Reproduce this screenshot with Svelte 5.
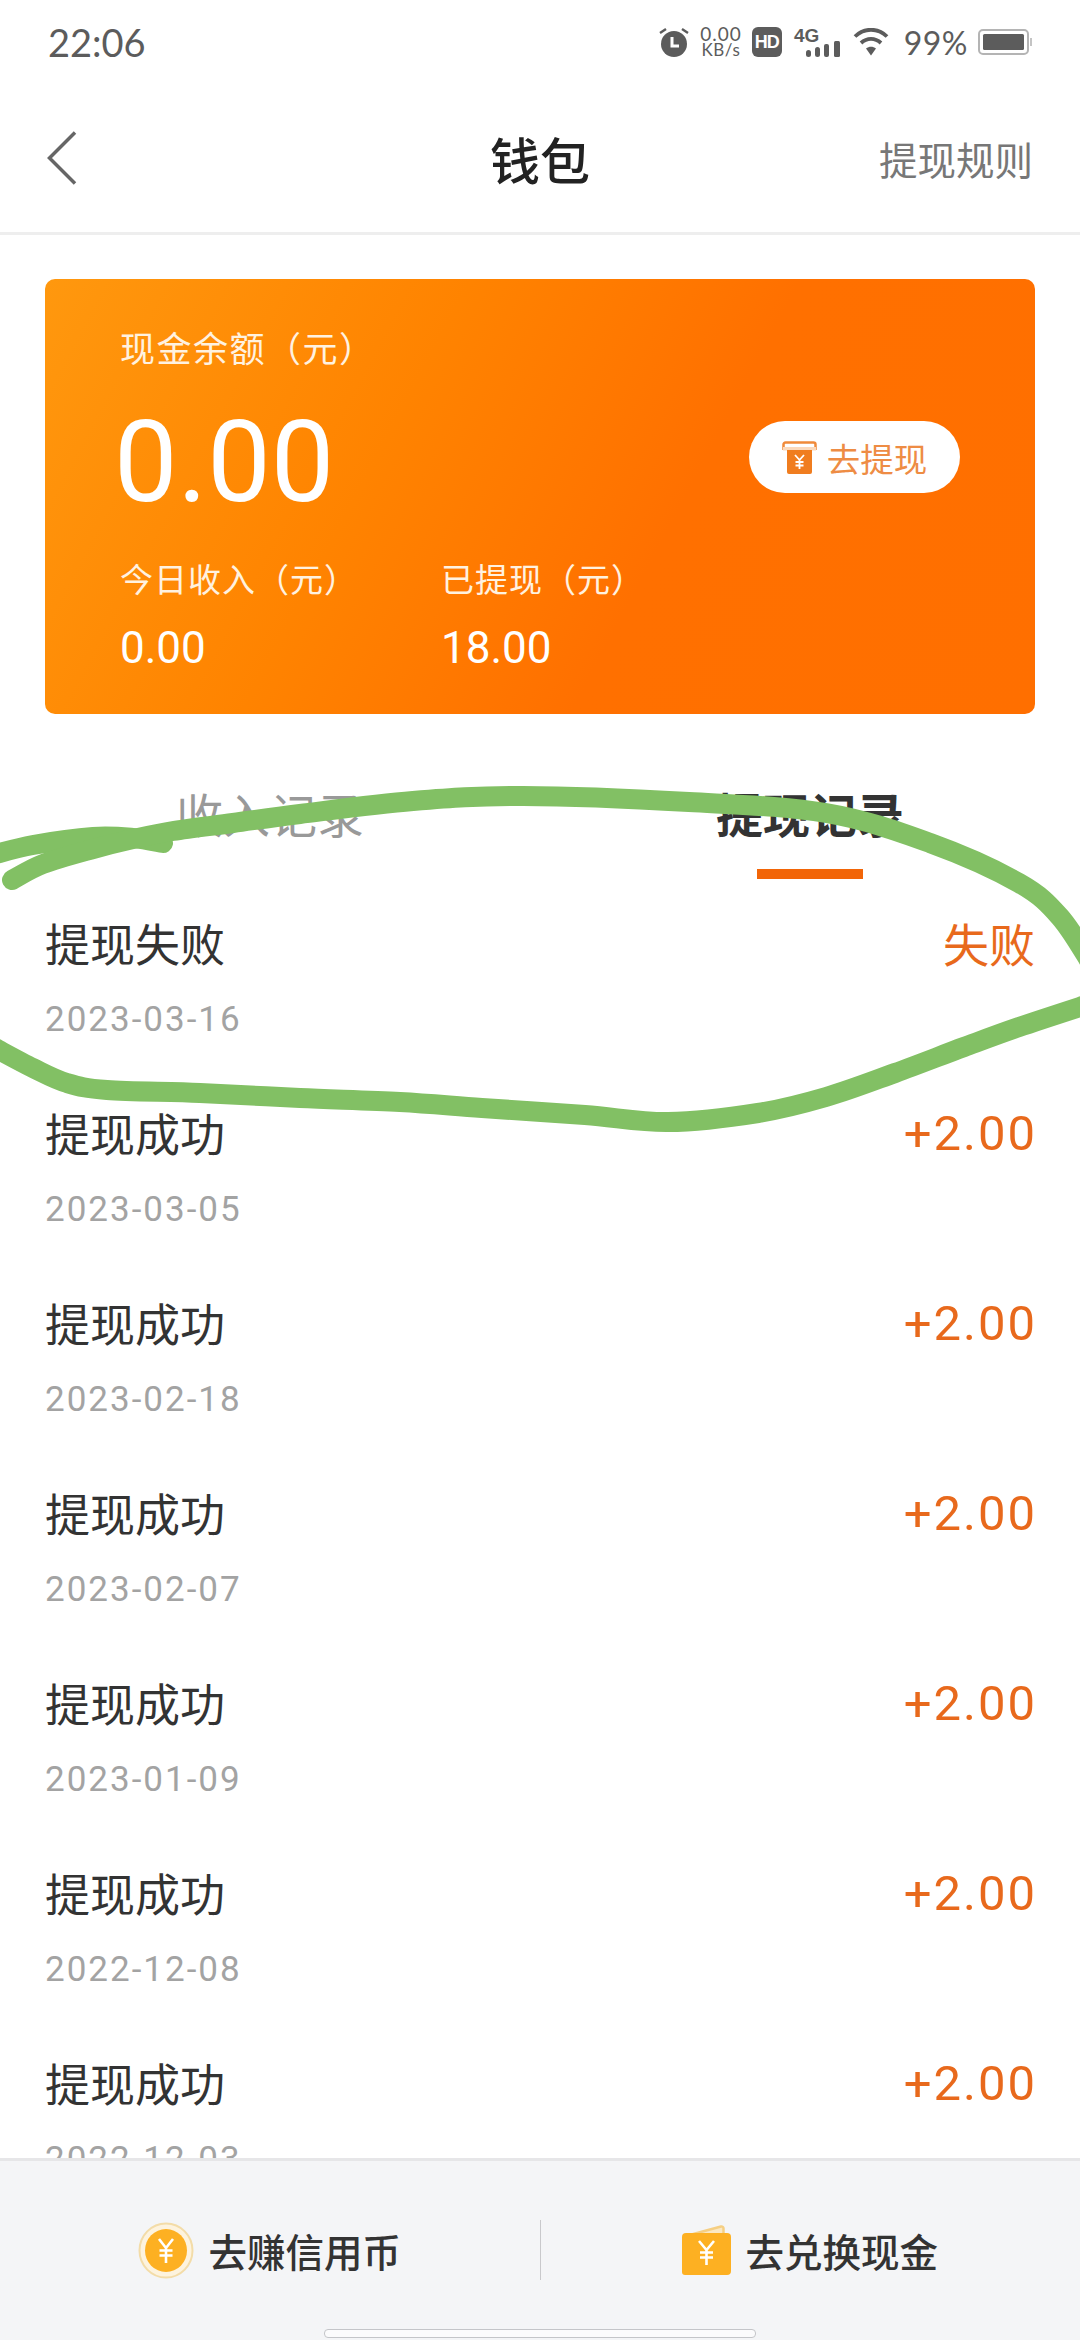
<script>
  const records = [
    { title: '提现失败', date: '2023-03-16', value: '失败', failed: true },
    { title: '提现成功', date: '2023-03-05', value: '+2.00' },
    { title: '提现成功', date: '2023-02-18', value: '+2.00' },
    { title: '提现成功', date: '2023-02-07', value: '+2.00' },
    { title: '提现成功', date: '2023-01-09', value: '+2.00' },
    { title: '提现成功', date: '2022-12-08', value: '+2.00' },
    { title: '提现成功', date: '2022-12-03', value: '+2.00' }
  ];

  // hand-drawn circle over the first record
  const loop = [
    [12, 880], [43, 864], [93, 849], [133, 839], [173, 831], [233, 823], [300, 814], [413, 801], [523, 796],
    [689, 802], [826, 813], [930, 843], [1019, 883], [1060, 917], [1092, 965]
  ];
  const loopEnd = [
    [1095, 1002], [1019, 1027], [964, 1047], [895, 1073], [826, 1097], [758, 1113], [668, 1122], [585, 1115],
    [482, 1108], [400, 1102], [300, 1098], [200, 1093], [107, 1090], [67, 1083], [33, 1068], [-5, 1048]
  ];
  const tail = [[-8, 855], [33, 845], [93, 837], [133, 838], [163, 843]];

  const smooth = (pts) => {
    let d = `M${pts[0][0]} ${pts[0][1]}`;
    for (let i = 0; i < pts.length - 1; i++) {
      const p0 = pts[i - 1] ?? pts[i];
      const p1 = pts[i];
      const p2 = pts[i + 1];
      const p3 = pts[i + 2] ?? p2;
      const c1 = [p1[0] + (p2[0] - p0[0]) / 6, p1[1] + (p2[1] - p0[1]) / 6];
      const c2 = [p2[0] - (p3[0] - p1[0]) / 6, p2[1] - (p3[1] - p1[1]) / 6];
      d += `C${c1[0]} ${c1[1]} ${c2[0]} ${c2[1]} ${p2[0]} ${p2[1]}`;
    }
    return d;
  };
</script>

<div class="page">
  <div class="status">
    <span class="time">22:06</span>
    <div class="status-right">
      <svg class="alarm" width="30" height="30" viewBox="0 0 30 30">
        <circle cx="15" cy="17" r="13" fill="#5c5c5c" />
        <path d="M1 6l6-4M29 6l-6-4" stroke="#5c5c5c" stroke-width="2.4" fill="none" />
        <path d="M13 10v9h7" stroke="#fff" stroke-width="3" fill="none" />
      </svg>
      <div class="speed"><span>0.00</span><small>KB/s</small></div>
      <div class="hd">HD</div>
      <svg class="net" width="48" height="30" viewBox="0 0 48 30">
        <text x="0" y="15" class="net-label">4G</text>
        <rect x="12" y="23" width="5" height="7" rx="2.5" fill="#5c5c5c" />
        <rect x="21" y="20" width="5" height="10" rx="2.5" fill="#5c5c5c" />
        <rect x="30" y="17" width="5" height="13" rx="2" fill="#5c5c5c" />
        <rect x="40" y="14" width="6" height="16" rx="1.5" fill="#5c5c5c" />
      </svg>
      <svg class="wifi" width="36" height="28" viewBox="0 0 36 28">
        <path d="M2 8.500C11-.5 25-.5 34 8.500" stroke="#5c5c5c" stroke-width="3.800" fill="none" />
        <path d="M8 15c6-5.500 14-5.500 20 0" stroke="#5c5c5c" stroke-width="3.800" fill="none" />
        <path d="M13 20.500c3-2.500 7-2.500 10 0L18 27.500z" fill="#5c5c5c" />
      </svg>
      <span class="percent">99%</span>
      <svg width="54" height="26" viewBox="0 0 54 26">
        <rect x="1" y="1" width="49" height="24" rx="4" fill="#fff" stroke="#b4b4b4" stroke-width="2" />
        <rect x="5" y="5" width="41" height="16" rx="1.500" fill="#5c5c5c" />
        <rect x="52" y="9" width="2" height="8" fill="#c4c4c4" />
      </svg>
    </div>
  </div>

  <header>
    <svg class="back" width="30" height="54" viewBox="0 0 30 54">
      <path d="M28 1.500L2.500 27 28 52.500" stroke="#666" stroke-width="3.500" fill="none" />
    </svg>
    <h1>钱包</h1>
    <span class="rules">提现规则</span>
  </header>

  <section class="card">
    <div class="card-label">现金余额（元）</div>
    <div class="balance-row">
      <div class="balance">0.00</div>
      <div class="withdraw">
        <svg width="35" height="33" viewBox="0 0 35 33">
          <path d="M1.500 9V3.500a2 2 0 0 1 2-2h28a2 2 0 0 1 2 2V9" stroke="#f08a3a" stroke-width="2.500" fill="none" />
          <path d="M1 6h33v3.500H1z" fill="#fbd9bb" />
          <path d="M5 9h25v22a2 2 0 0 1-2 2H7a2 2 0 0 1-2-2z" fill="#f07d1f" />
          <path d="M13 14l4.500 5 4.500-5M17.500 19v9M13.500 21h8M13.500 24.500h8" stroke="#fff" stroke-width="1.800" fill="none" />
        </svg>
        <span>去提现</span>
      </div>
    </div>
    <div class="stats">
      <div class="stat">
        <div class="stat-label">今日收入（元）</div>
        <div class="stat-value">0.00</div>
      </div>
      <div class="stat">
        <div class="stat-label">已提现（元）</div>
        <div class="stat-value">18.00</div>
      </div>
    </div>
  </section>

  <div class="tabs">
    <div class="tab">收入记录</div>
    <div class="tab active">提现记录</div>
  </div>

  <div class="list">
    {#each records as r}
      <div class="row">
        <div class="row-top">
          <span class="row-title">{r.title}</span>
          <span class="row-value" class:failed={r.failed}>{r.value}</span>
        </div>
        <div class="row-date">{r.date}</div>
      </div>
    {/each}
  </div>

  <footer>
    <div class="actions">
      <div class="action">
        <svg width="56" height="57" viewBox="0 0 56 57">
          <ellipse cx="28" cy="28.500" rx="26.500" ry="27" fill="#fdf3de" stroke="#f3dca8" stroke-width="2" />
          <ellipse cx="28" cy="28.500" rx="21" ry="21.500" fill="#fdb022" />
          <path d="M21 17l7 9 7-9M28 26v15M21.500 28.500h13M21.500 33.500h13" stroke="#fff" stroke-width="2.600" fill="none" />
        </svg>
        <span>去赚信用币</span>
      </div>
      <div class="sep"></div>
      <div class="action">
        <svg width="49" height="50" viewBox="0 0 49 50">
          <path d="M4 11L39 1.500a2 2 0 0 1 2.500 2V10" stroke="#f5cf83" stroke-width="2.500" fill="#fbe8c3" />
          <path d="M0 12a4 4 0 0 1 4-4h41a4 4 0 0 1 4 4v34a4 4 0 0 1-4 4H3a3 3 0 0 1-3-3z" fill="#fdb022" />
          <path d="M17 16l7.500 9 7.500-9M24.500 25v15M18 27.500h13M18 32.500h13" stroke="#fff" stroke-width="2.600" fill="none" />
        </svg>
        <span>去兑换现金</span>
      </div>
    </div>
    <div class="home"></div>
  </footer>

  <svg class="scribble" width="1080" height="2340" viewBox="0 0 1080 2340">
    <g fill="none" stroke="#82c064" stroke-width="20" stroke-linecap="round" stroke-linejoin="round">
      <path d={smooth(tail)} />
      <path d={smooth(loop)} />
      <path d={smooth(loopEnd)} />
    </g>
  </svg>
</div>

<style>
  :global(body) {
    margin: 0;
    background: #fff;
  }

  .page {
    position: relative;
    width: 1080px;
    height: 2340px;
    overflow: hidden;
    display: flex;
    flex-direction: column;
    background: #fff;
    font-family: Roboto, "Noto Sans CJK SC", sans-serif;
    color: #333;
  }

  .status {
    height: 84px;
    flex: none;
    display: flex;
    align-items: center;
    justify-content: space-between;
    padding: 0 48px;
    color: #5c5c5c;
  }

  .time {
    font-family: Lato, sans-serif;
    font-size: 38px;
  }

  .status-right {
    display: flex;
    align-items: center;
  }

  .speed {
    display: flex;
    flex-direction: column;
    align-items: center;
    margin-left: 11px;
    font-family: Lato, sans-serif;
    line-height: 16px;
    font-size: 19px;
    letter-spacing: 1px;
  }

  .speed small {
    font-size: 17px;
    letter-spacing: 0.5px;
  }

  .hd {
    width: 30px;
    height: 30px;
    margin-left: 10px;
    border-radius: 6px;
    background: #5c5c5c;
    color: #fff;
    font-family: "Liberation Sans", sans-serif;
    font-size: 18px;
    font-weight: 700;
    line-height: 30px;
    text-align: center;
    letter-spacing: -1px;
  }

  .net {
    margin-left: 12px;
    overflow: visible;
  }

  .net-label {
    font-family: "Liberation Sans", sans-serif;
    font-size: 19px;
    font-weight: 700;
    fill: #5c5c5c;
  }

  .wifi {
    margin-left: 11px;
  }

  .percent {
    margin-left: 15px;
    margin-right: 10px;
    font-family: Lato, sans-serif;
    font-size: 32px;
    letter-spacing: 0.5px;
  }

  header {
    height: 148px;
    flex: none;
    display: grid;
    grid-template-columns: 1fr auto 1fr;
    align-items: center;
    padding: 0 47px;
    border-bottom: 3px solid #eee;
  }

  h1 {
    margin: 0;
    font-size: 50px;
    font-weight: 500;
    color: #222;
  }

  .rules {
    justify-self: end;
    font-size: 38.500px;
    color: #777;
  }

  .card {
    flex: none;
    margin: 44px 45px 0;
    padding: 47px 75px 41px 75px;
    border-radius: 10px;
    background: linear-gradient(118deg, #ff980e 0%, #ff8300 35%, #ff7000 62%, #ff6f00 100%);
    color: #fff;
  }

  .card-label {
    font-size: 35px;
    letter-spacing: 1.500px;
    line-height: 50px;
    color: #fff2e0;
  }

  .balance-row {
    display: flex;
    align-items: center;
    justify-content: space-between;
    margin-top: 27px;
  }

  .balance {
    font-size: 113px;
    line-height: 120px;
    margin-left: -6px;
  }

  .withdraw {
    display: flex;
    align-items: center;
    justify-content: center;
    gap: 10px;
    width: 211px;
    height: 72px;
    margin-bottom: 12px;
    border-radius: 36px;
    background: #fff;
    color: #ee8c44;
    font-size: 33.500px;
  }

  .stats {
    display: flex;
    margin-top: 36px;
  }

  .stat {
    width: 321px;
  }

  .stat-label {
    font-size: 33px;
    letter-spacing: 1px;
    line-height: 44px;
    color: #fff2e0;
  }

  .stat-value {
    margin-top: 20px;
    font-size: 44px;
    line-height: 50px;
  }

  .tabs {
    flex: none;
    display: grid;
    grid-template-columns: 1fr 1fr;
    margin-top: 73px;
    height: 93px;
  }

  .tab {
    position: relative;
    text-align: center;
    font-size: 47px;
    line-height: 60px;
    color: #999;
  }

  .tab.active {
    color: #333;
    font-weight: 700;
  }

  .tab.active::after {
    content: "";
    position: absolute;
    left: 50%;
    top: 82px;
    width: 106px;
    height: 10px;
    margin-left: -53px;
    background: #f26507;
  }

  .list {
    flex: 1;
    min-height: 0;
    overflow: hidden;
  }

  .row {
    height: 190px;
    box-sizing: border-box;
    padding: 32px 45px 0;
  }

  .row-top {
    display: flex;
    justify-content: space-between;
    align-items: center;
    height: 60px;
  }

  .row-title {
    font-size: 45px;
    color: #333;
  }

  .row-value {
    position: relative;
    top: 1px;
    font-size: 49px;
    letter-spacing: 2px;
    margin-right: -2px;
    color: #e8691c;
  }

  .row-value.failed {
    top: 0;
    font-size: 46px;
    letter-spacing: 0;
    margin-right: 0;
  }

  .row-date {
    margin-top: 26px;
    font-size: 35px;
    line-height: 44px;
    letter-spacing: 2px;
    color: #a3a3a3;
  }

  footer {
    flex: none;
    height: 182px;
    box-sizing: border-box;
    border-top: 3px solid #e6e6e8;
    background: #f4f5f7;
    padding-top: 59px;
  }

  .actions {
    display: flex;
    align-items: center;
    height: 60px;
  }

  .action {
    flex: 1;
    display: flex;
    align-items: center;
    justify-content: center;
    gap: 14px;
    font-size: 38.500px;
    font-weight: 500;
    color: #333;
  }

  .sep {
    width: 1px;
    height: 60px;
    background: #c9c9cc;
  }

  .home {
    width: 432px;
    height: 9px;
    margin: 49px auto 0;
    box-sizing: border-box;
    border: 1px solid #c4c5c9;
    border-radius: 4px;
    background: #fbfbfc;
  }

  .scribble {
    position: absolute;
    inset: 0;
    pointer-events: none;
  }
</style>
